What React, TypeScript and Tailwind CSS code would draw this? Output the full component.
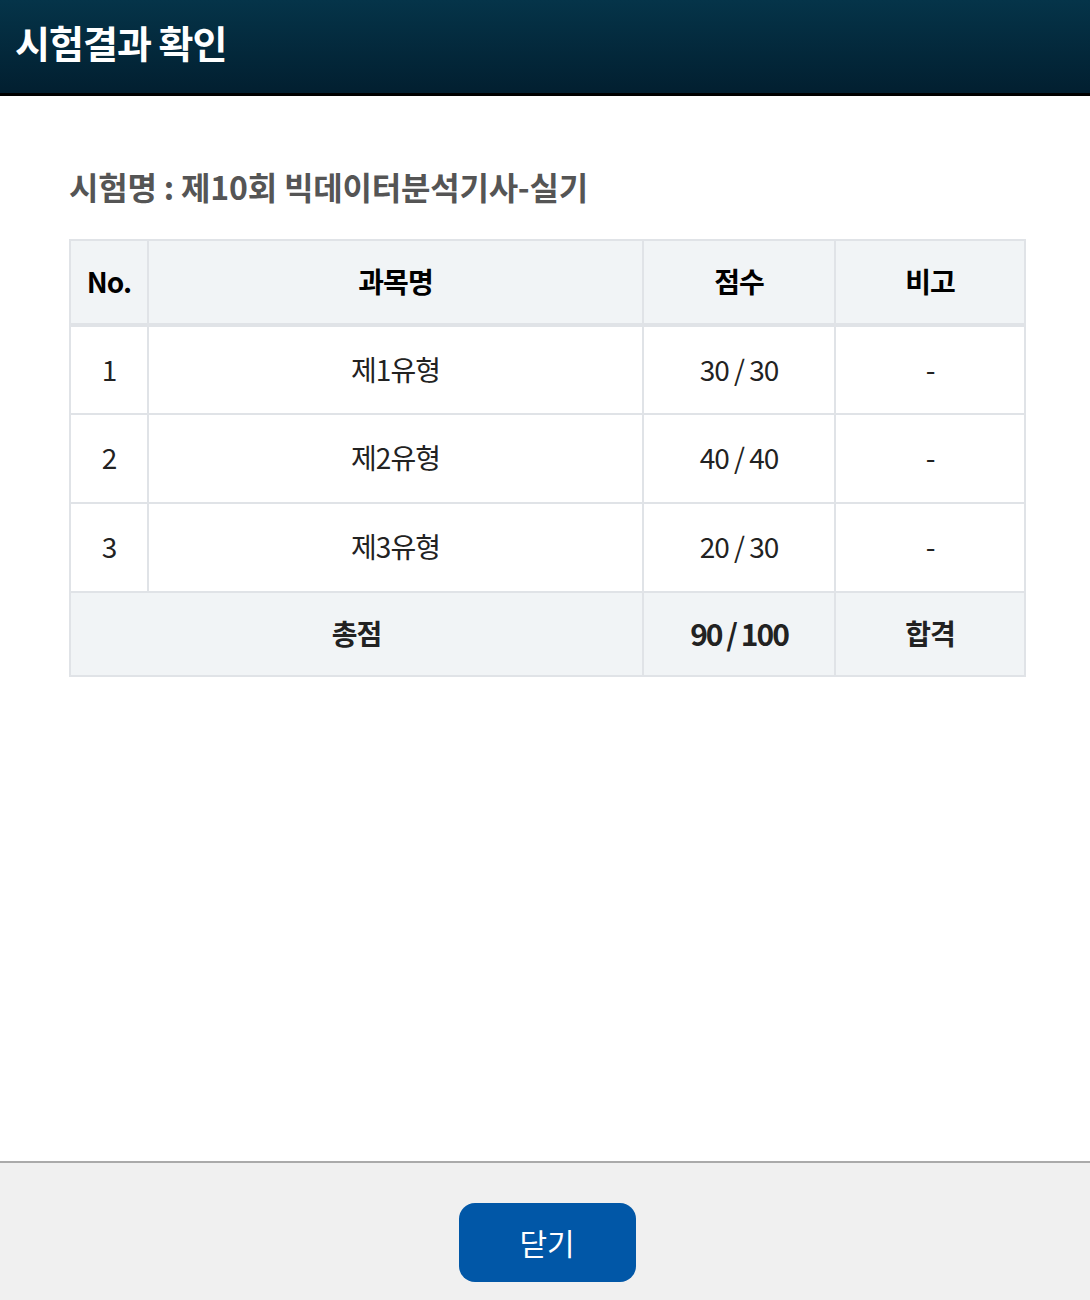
const rows = [
  { no: '1', name: '제1유형', score: '30 / 30', note: '-' },
  { no: '2', name: '제2유형', score: '40 / 40', note: '-' },
  { no: '3', name: '제3유형', score: '20 / 30', note: '-' },
];

export default function App() {
  return (
    <div
      className="flex h-[1300px] w-full flex-col bg-white"
      style={{ fontFamily: '"Noto Sans CJK KR", "Noto Sans", sans-serif' }}
    >
      {/* Header */}
      <header className="flex h-[96px] shrink-0 items-center border-b-[3px] border-black bg-gradient-to-b from-[#053449] to-[#021f30] px-[15px] pb-[10px]">
        <h1 className="text-[38px] font-bold tracking-[-1px] text-white">시험결과 확인</h1>
      </header>

      {/* Content */}
      <main className="flex-1 px-[69px] pt-[66px]">
        <h2 className="mb-[29px] text-[32px] font-bold leading-[48px] tracking-[-0.2px] text-[#555]">
          시험명 : 제10회 빅데이터분석기사-실기
        </h2>

        <table className="w-[957px] border-collapse text-center text-[28px] leading-[36px] tracking-[-1px] text-[#222]">
          <thead>
            <tr className="h-[85px] bg-[#f1f4f6] font-bold text-black">
              <th className="w-[78px] border-2 border-b-4 border-[#e0e3e7] pb-[2px]">No.</th>
              <th className="w-[495px] border-2 border-b-4 border-[#e0e3e7] pb-[2px]">과목명</th>
              <th className="w-[192px] border-2 border-b-4 border-[#e0e3e7] pb-[2px]">점수</th>
              <th className="border-2 border-b-4 border-[#e0e3e7] pb-[2px]">비고</th>
            </tr>
          </thead>
          <tbody>
            {rows.map((r) => (
              <tr key={r.no} className="h-[89px]">
                <td className="border-2 border-[#e0e3e7] pb-[3px]">{r.no}</td>
                <td className="border-2 border-[#e0e3e7] pb-[3px]">{r.name}</td>
                <td className="border-2 border-[#e0e3e7] pb-[3px]">{r.score}</td>
                <td className="border-2 border-[#e0e3e7] pb-[3px]">{r.note}</td>
              </tr>
            ))}
            <tr className="h-[84px] bg-[#f1f4f6] font-bold">
              <td colSpan={2} className="border-2 border-[#e0e3e7] pb-[2px]">총점</td>
              <td className="border-2 border-[#e0e3e7] pb-[2px] text-[30px] tracking-[-2px]">90 / 100</td>
              <td className="border-2 border-[#e0e3e7] pb-[2px]">합격</td>
            </tr>
          </tbody>
        </table>
      </main>

      {/* Footer */}
      <footer className="flex h-[139px] shrink-0 justify-center border-t-2 border-[#aaa] bg-[#f0f0f0] pl-[4px] pt-[40px]">
        <button className="h-[79px] w-[177px] rounded-[16px] bg-[#0157a7] text-[30px] text-white">
          닫기
        </button>
      </footer>
    </div>
  );
}
